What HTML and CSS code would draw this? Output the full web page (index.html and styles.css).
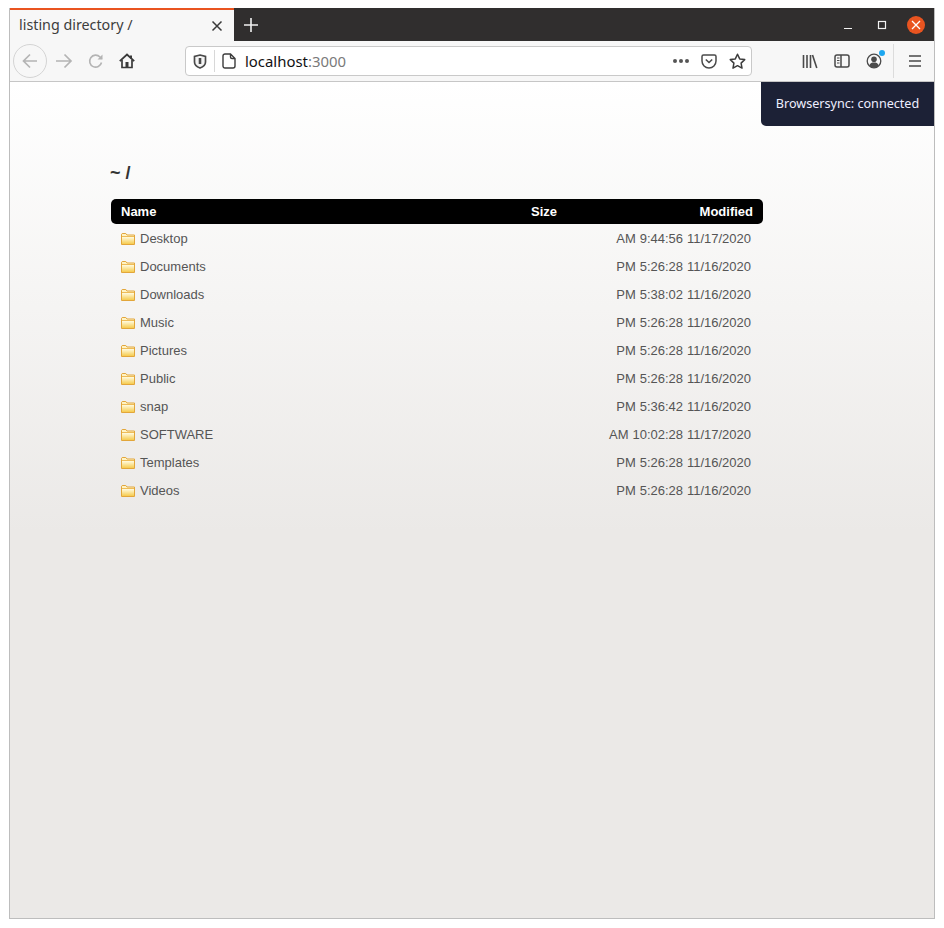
FILE: index.html
```html
<!DOCTYPE html>
<html lang="en">
<head>
<meta charset="utf-8">
<title>listing directory /</title>
<link rel="stylesheet" href="styles.css">
</head>
<body>
<svg class="defs" width="0" height="0" aria-hidden="true">
  <defs>
    <linearGradient id="fold" x1="0" y1="0" x2="0" y2="1">
      <stop offset="0" stop-color="#fffbe0"/>
      <stop offset="1" stop-color="#f6cb4e"/>
    </linearGradient>
    <symbol id="folder" viewBox="0 0 14 12">
      <path d="M.5 11.5V1.2l.7-.7h3.6l1.2 1.500h7.500v9.500z" fill="#fff3c4" stroke="#e2a63a"/>
      <path d="M1 4h12v7H1z" fill="url(#fold)"/>
      <path d="M1 3.500h12" stroke="#eebc58" stroke-width="1"/>
    </symbol>
  </defs>
</svg>
<div class="window">
  <header class="tabbar">
    <div class="tab">
      <span class="tab-title">listing directory /</span>
      <svg class="tab-close" width="12" height="12" viewBox="0 0 12 12"><path d="M1.500 1.500l9 9M10.500 1.500l-9 9" stroke="#3a3a3a" stroke-width="1.500" fill="none"/></svg>
    </div>
    <svg class="new-tab" width="16" height="16" viewBox="0 0 16 16"><path d="M8 1v14M1 8h14" stroke="#f0f0f0" stroke-width="1.600" fill="none"/></svg>
    <div class="win-controls">
      <svg width="10" height="10" viewBox="0 0 10 10"><path d="M1 8.500h8" stroke="#f2f2f2" stroke-width="1"/></svg>
      <svg width="10" height="10" viewBox="0 0 10 10"><rect x="1.500" y="1.500" width="7" height="7" fill="none" stroke="#f2f2f2" stroke-width="1.200"/></svg>
      <span class="win-close"><svg width="10" height="10" viewBox="0 0 10 10"><path d="M1 1l8 8M9 1l-8 8" stroke="#fff" stroke-width="1.300" fill="none"/></svg></span>
    </div>
  </header>
  <nav class="toolbar">
    <span class="back">
      <svg width="18" height="18" viewBox="0 0 18 18"><path d="M16 9H2.500M9 2.500L2.500 9 9 15.500" fill="none" stroke="#b4b4b4" stroke-width="1.700"/></svg>
    </span>
    <svg class="forward" width="18" height="16" viewBox="0 0 18 16"><path d="M1 8h15M9.500 1.500L16 8l-6.500 6.500" fill="none" stroke="#b4b4b4" stroke-width="1.700"/></svg>
    <svg class="reload" width="16" height="16" viewBox="0 0 16 16"><path d="M13.500 9.500A6 6 0 1 1 12 4l1.800 1.800" fill="none" stroke="#b4b4b4" stroke-width="1.600"/><path d="M14.500 1.500v5h-5z" fill="#b4b4b4"/></svg>
    <svg class="home" width="16" height="16" viewBox="0 0 16 16"><path d="M.8 8.200L8 1.500l7.200 6.700" fill="none" stroke="#3a3a3a" stroke-width="1.800"/><path d="M3 7v7.500h10V7" fill="none" stroke="#3a3a3a" stroke-width="1.700"/><rect x="6.500" y="9" width="3" height="6" fill="#3a3a3a"/><path d="M11 2.500h2v3h-2z" fill="#3a3a3a"/></svg>
    <div class="urlbar">
      <svg class="shield" width="14" height="15" viewBox="0 0 14 15"><path d="M7 1l5.500 1.300V8c0 3-2.500 5-5.500 6C4 13 1.500 11 1.500 8V2.300z" fill="#f4f4f4" stroke="#4a4a4a" stroke-width="1.700"/><path d="M7 4v6" stroke="#4a4a4a" stroke-width="2.600"/></svg>
      <span class="url-sep"></span>
      <svg class="page" width="14" height="16" viewBox="0 0 14 16"><path d="M3 1h5.500L13 5.500V13a2 2 0 0 1-2 2H3a2 2 0 0 1-2-2V3a2 2 0 0 1 2-2zM8.500 1v3a1.500 1.500 0 0 0 1.500 1.500h3" fill="none" stroke="#3c3c3c" stroke-width="1.400"/></svg>
      <span class="url"><span class="host">localhost</span>:3000</span>
      <span class="dots"><i></i><i></i><i></i></span>
      <svg class="pocket" width="16" height="15" viewBox="0 0 16 15"><path d="M2.500 1h11A1.500 1.500 0 0 1 15 2.500V7a7 7 0 0 1-14 0V2.500A1.500 1.500 0 0 1 2.500 1z" fill="none" stroke="#4a4a4a" stroke-width="1.500"/><path d="M4.800 5.500L8 8.500l3.200-3" fill="none" stroke="#4a4a4a" stroke-width="1.600"/></svg>
      <svg class="star" width="17" height="16" viewBox="0 0 17 16"><path d="M8.500 1.300l2.200 4.600 5 .7-3.600 3.500.9 5-4.500-2.400L4 15.100l.9-5L1.300 6.600l5-.7z" fill="none" stroke="#3c3c3c" stroke-width="1.500" stroke-linejoin="round"/></svg>
    </div>
    <div class="tools">
      <svg width="16" height="15" viewBox="0 0 16 15"><path d="M1.500 1v13M5 1v13M8.500 1v13M10.500 1l4.300 13" fill="none" stroke="#4a4a4a" stroke-width="1.600"/></svg>
      <svg width="16" height="14" viewBox="0 0 16 14"><rect x="1" y="1" width="14" height="12" rx="2" fill="none" stroke="#4a4a4a" stroke-width="1.500"/><path d="M7 1v12" stroke="#4a4a4a" stroke-width="1.500"/><path d="M3 4h2.500M3 6.500h2.500M3 9h2.500" stroke="#4a4a4a" stroke-width="1"/></svg>
      <span class="account">
        <svg width="16" height="16" viewBox="0 0 16 16"><circle cx="8" cy="8" r="6.800" fill="none" stroke="#4a4a4a" stroke-width="1.300"/><circle cx="8" cy="6.300" r="2.800" fill="#4a4a4a"/><path d="M3.300 12.500C4 10 6 9.500 8 9.500s4 .5 4.700 3A6 6 0 0 1 3.300 12.500z" fill="#4a4a4a"/></svg>
        <i class="badge"></i>
      </span>
      <span class="tool-sep"></span>
      <svg width="14" height="12" viewBox="0 0 14 12"><path d="M1 1h12M1 6h12M1 11h12" stroke="#4a4a4a" stroke-width="1.600"/></svg>
    </div>
  </nav>
  <main class="content">
    <div class="toast">Browsersync: connected</div>
    <div class="listing">
      <h1 class="crumbs">~ /</h1>
      <div class="table-head">
        <span class="col-name">Name</span>
        <span class="col-size">Size</span>
        <span class="col-mod">Modified</span>
      </div>
      <ul class="rows">
        <li class="row"><svg class="ficon"><use href="#folder"/></svg><span class="col-name">Desktop</span><span class="col-mod">AM 9:44:56 11/17/2020</span></li>
        <li class="row"><svg class="ficon"><use href="#folder"/></svg><span class="col-name">Documents</span><span class="col-mod">PM 5:26:28 11/16/2020</span></li>
        <li class="row"><svg class="ficon"><use href="#folder"/></svg><span class="col-name">Downloads</span><span class="col-mod">PM 5:38:02 11/16/2020</span></li>
        <li class="row"><svg class="ficon"><use href="#folder"/></svg><span class="col-name">Music</span><span class="col-mod">PM 5:26:28 11/16/2020</span></li>
        <li class="row"><svg class="ficon"><use href="#folder"/></svg><span class="col-name">Pictures</span><span class="col-mod">PM 5:26:28 11/16/2020</span></li>
        <li class="row"><svg class="ficon"><use href="#folder"/></svg><span class="col-name">Public</span><span class="col-mod">PM 5:26:28 11/16/2020</span></li>
        <li class="row"><svg class="ficon"><use href="#folder"/></svg><span class="col-name">snap</span><span class="col-mod">PM 5:36:42 11/16/2020</span></li>
        <li class="row"><svg class="ficon"><use href="#folder"/></svg><span class="col-name">SOFTWARE</span><span class="col-mod">AM 10:02:28 11/17/2020</span></li>
        <li class="row"><svg class="ficon"><use href="#folder"/></svg><span class="col-name">Templates</span><span class="col-mod">PM 5:26:28 11/16/2020</span></li>
        <li class="row"><svg class="ficon"><use href="#folder"/></svg><span class="col-name">Videos</span><span class="col-mod">PM 5:26:28 11/16/2020</span></li>
      </ul>
    </div>
  </main>
</div>
</body>
</html>
```
FILE: styles.css
```css
* { box-sizing: border-box; }
html, body { margin: 0; padding: 0; background: #fff; }
body { padding: 8px 9px 9px; height: 928px; overflow: hidden; font-family: "Liberation Sans", Arial, sans-serif; }
.defs { position: absolute; }
.window { height: 911px; border: 1px solid #bdbdbd; border-top: 0; display: flex; flex-direction: column; }

.tabbar { height: 33px; background: #302e2e; display: flex; align-items: center; flex: none; }
.tab { width: 224px; height: 33px; background: #f7f7f7; border-top: 2px solid #e95420; display: flex; align-items: center; padding: 0 11px 0 9px; justify-content: space-between; flex: none; }
.tab-title { font: 14.300px/18px "Noto Sans", sans-serif; color: #3d3d3d; margin-top: -1px; }
.new-tab { margin-left: 9px; }
.win-controls { margin-left: auto; display: flex; align-items: center; gap: 24px; padding-right: 9px; }
.win-close { width: 18px; height: 18px; border-radius: 50%; background: #e95420; display: flex; align-items: center; justify-content: center; margin-left: -4px; }

.toolbar { height: 41px; background: #f7f7f7; border-bottom: 1px solid #c6c6c6; display: flex; align-items: center; flex: none; padding-left: 3px; }
.back { width: 34px; height: 34px; border: 1px solid #d4d4d4; border-radius: 50%; display: flex; align-items: center; justify-content: center; flex: none; }
.forward { margin-left: 8px; flex: none; }
.reload { margin-left: 15px; flex: none; }
.home { margin-left: 15px; flex: none; }
.urlbar { margin-left: 50px; width: 567px; height: 30px; background: #fff; border: 1px solid #c9c9c9; border-radius: 4px; display: flex; align-items: center; flex: none; padding-left: 7px; }
.shield { flex: none; }
.url-sep { width: 1px; height: 22px; background: #d8d8d8; margin: 0 7px 0 7px; flex: none; }
.page { flex: none; }
.url { margin-left: 9px; font: 14.900px "Noto Sans", sans-serif; color: #7a7a7a; }
.host { color: #111; }
.dots { margin-left: auto; display: flex; gap: 2px; }
.dots i { width: 4px; height: 4px; border-radius: 50%; background: #555; }
.pocket { margin-left: 12px; flex: none; }
.star { margin: 0 5px 0 12px; flex: none; }
.tools { display: flex; align-items: center; margin-left: 50px; gap: 16px; }
.account { position: relative; display: flex; }
.badge { position: absolute; top: -3px; right: -3px; width: 6px; height: 6px; border-radius: 50%; background: #1ea7f0; }
.tool-sep { width: 1px; height: 34px; background: #dcdcdc; margin: 0 -2px 0 -5px; }

.content { position: relative; flex: 1; min-height: 0; background: linear-gradient(to bottom, #fff 0, #ebe9e7 450px); padding: 81px 0 0 101px; }
.toast { position: absolute; top: 0; right: 0; width: 173px; height: 44px; background: #1c2136; color: #eef; border-bottom-left-radius: 5px; font: 12.600px/44px "Noto Sans", sans-serif; text-align: center; }
.listing { width: 652px; }
.crumbs { margin: 0 0 16px -1px; font-size: 18px; line-height: 20px; font-weight: 700; color: #333; }
.table-head { height: 25px; background: #000; color: #fff; border-radius: 5px; display: flex; align-items: center; padding: 0 10px; font-size: 13px; font-weight: 700; }
.table-head .col-name { width: 410px; }
.table-head .col-size { flex: 1; }
.rows { list-style: none; margin: 0; padding: 0; }
.row { height: 28px; display: flex; align-items: center; padding: 0 12px 0 10px; font-size: 13px; color: #555; }
.ficon { width: 14px; height: 12px; margin: 2px 5px 0 0; flex: none; }
.row .col-mod { margin-left: auto; word-spacing: .25px; }
```
